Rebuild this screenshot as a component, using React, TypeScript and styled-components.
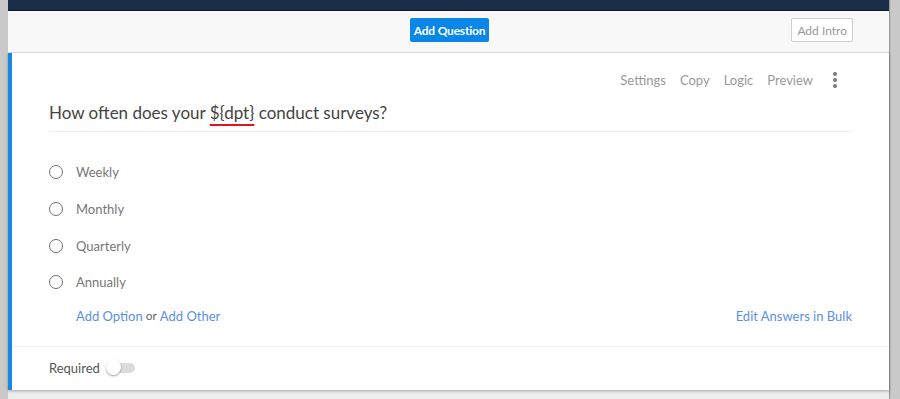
import styled, { createGlobalStyle } from 'styled-components'

const GlobalStyle = createGlobalStyle`
  body {
    margin: 0;
    font-family: Lato, "Open Sans", sans-serif;
    background: #c9c9c9;
  }
`

const Page = styled.div`
  display: flex;
  height: 399px;
  padding: 0 11px 0 8px;
  background: #c9c9c9;
  box-sizing: border-box;
`

const Column = styled.div`
  flex: 1;
  display: flex;
  flex-direction: column;
  background: #ededed;
  box-shadow: 1px 0 1px rgba(0, 0, 0, 0.25);
`

const TopBar = styled.div`
  height: 10px;
  background: #1b2d49;
  border-bottom: 1px solid #0c1a2d;
`

const Toolbar = styled.div`
  position: relative;
  height: 42px;
  box-sizing: border-box;
  padding-top: 7px;
  display: flex;
  align-items: flex-start;
  justify-content: center;
  background: #f8f8f8;
  border-bottom: 1px solid #d8d8d8;
`

const PrimaryButton = styled.button`
  height: 24px;
  padding: 0 4px;
  margin-left: 2px;
  border: none;
  border-radius: 2px;
  background: #0a86e8;
  color: #fff;
  font-family: Lato, sans-serif;
  font-weight: 700;
  font-size: 12px;
  letter-spacing: -0.2px;
`

const GhostButton = styled.button`
  position: absolute;
  right: 36px;
  top: 7px;
  height: 24px;
  padding: 0 5px;
  border: 1px solid #cfcfcf;
  border-radius: 2px;
  background: #fff;
  color: #999;
  font-family: Lato, sans-serif;
  font-size: 12px;
`

const Card = styled.div`
  background: #fff;
  border-left: 4px solid #1a86e8;
  box-shadow: 0 1px 3px rgba(0, 0, 0, 0.3);
`

const Body = styled.div`
  padding: 17px 37px 20px;
`

const Actions = styled.div`
  height: 20px;
  display: flex;
  align-items: center;
  justify-content: flex-end;
  gap: 14px;
  padding-right: 15px;
`

const Action = styled.span`
  color: #999;
  font-size: 13px;
`

const Dots = styled.span`
  display: flex;
  flex-direction: column;
  gap: 2px;
  margin-left: 6px;

  i {
    width: 4px;
    height: 4px;
    border-radius: 50%;
    background: #777;
  }
`

const Question = styled.div`
  margin-top: 12px;
  padding-bottom: 7px;
  line-height: 22px;
  font-size: 17px;
  color: #444;
  border-bottom: 1px solid #ececec;
`

const Variable = styled.span`
  text-decoration: underline;
  text-decoration-color: #e3141f;
  text-decoration-thickness: 2px;
  text-underline-offset: 5px;
`

const Options = styled.div`
  margin-top: 22px;
`

const Option = styled.label`
  height: 36.7px;
  display: flex;
  align-items: center;
  gap: 13px;
  font-size: 13px;
  color: #777;
`

const Radio = styled.span`
  width: 12px;
  height: 12px;
  border: 1.5px solid #707070;
  border-radius: 50%;
`

const Links = styled.div`
  margin-top: 5px;
  height: 20px;
  display: flex;
  align-items: center;
  padding-left: 27px;
  font-size: 13px;
`

const LinkText = styled.a`
  color: #5b8fe3;
`

const Or = styled.span`
  color: #666;
  font-size: 12px;
  margin: 0 3px;
`

const Bulk = styled(LinkText)`
  margin-left: auto;
`

const Footer = styled.div`
  height: 43px;
  display: flex;
  align-items: center;
  padding-left: 37px;
  border-top: 1px solid #efefef;
  font-size: 13px;
  color: #555;
`

const Toggle = styled.span`
  position: relative;
  width: 26px;
  height: 10px;
  margin-left: 9px;
  border-radius: 5px;
  background: #dcdcdc;

  &::after {
    content: '';
    position: absolute;
    left: -3px;
    top: -3px;
    width: 15px;
    height: 15px;
    border-radius: 50%;
    background: #fff;
    box-shadow: 0 1px 2px rgba(0, 0, 0, 0.4);
  }
`

const choices = ['Weekly', 'Monthly', 'Quarterly', 'Annually']

export default function App() {
  return (
    <>
      <GlobalStyle />
      <Page>
        <Column>
          <TopBar />
          <Toolbar>
            <PrimaryButton>Add Question</PrimaryButton>
            <GhostButton>Add Intro</GhostButton>
          </Toolbar>
          <Card>
            <Body>
              <Actions>
                <Action>Settings</Action>
                <Action>Copy</Action>
                <Action>Logic</Action>
                <Action>Preview</Action>
                <Dots>
                  <i />
                  <i />
                  <i />
                </Dots>
              </Actions>
              <Question>
                How often does your <Variable>{'${dpt}'}</Variable> conduct surveys?
              </Question>
              <Options>
                {choices.map((c) => (
                  <Option key={c}>
                    <Radio />
                    {c}
                  </Option>
                ))}
              </Options>
              <Links>
                <LinkText>Add Option</LinkText>
                <Or>or</Or>
                <LinkText>Add Other</LinkText>
                <Bulk>Edit Answers in Bulk</Bulk>
              </Links>
            </Body>
            <Footer>
              Required
              <Toggle />
            </Footer>
          </Card>
        </Column>
      </Page>
    </>
  )
}
